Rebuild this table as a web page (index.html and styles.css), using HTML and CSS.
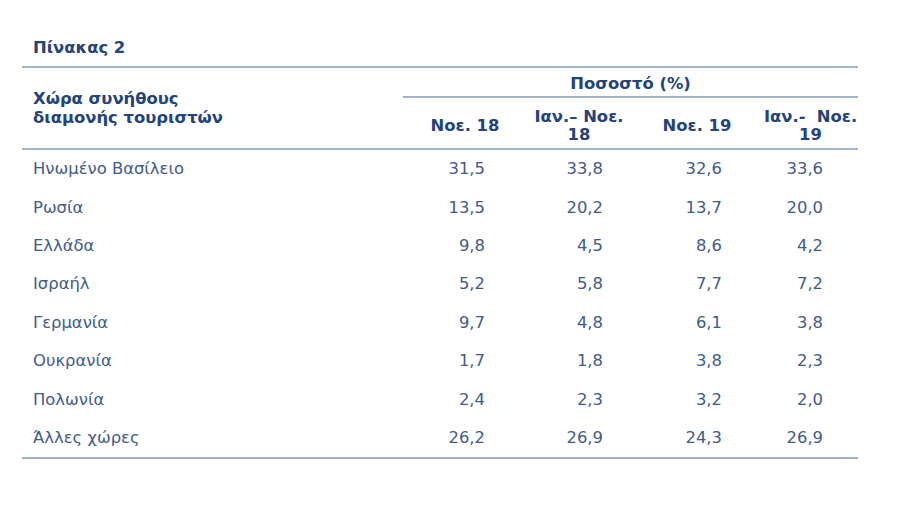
FILE: index.html
```html
<!DOCTYPE html>
<html lang="el">
<head>
<meta charset="utf-8">
<title>Πίνακας 2</title>
<link rel="stylesheet" href="styles.css">
</head>
<body>
<div class="wrap">
  <div class="title">Πίνακας 2</div>
  <table class="data">
    <colgroup>
      <col class="c0"><col class="c1"><col class="c2"><col class="c3"><col class="c4">
    </colgroup>
    <thead>
      <tr>
        <th rowspan="2" class="country-h">Χώρα συνήθους<br>διαμονής τουριστών</th>
        <th colspan="4" class="group">Ποσοστό (%)</th>
      </tr>
      <tr class="sub">
        <th>Νοε. 18</th>
        <th>Ιαν.– Νοε.<br>18</th>
        <th>Νοε. 19</th>
        <th>Ιαν.-&nbsp; Νοε.<br>19</th>
      </tr>
    </thead>
    <tbody>
      <tr><td>Ηνωμένο Βασίλειο</td><td>31,5</td><td>33,8</td><td>32,6</td><td>33,6</td></tr>
      <tr><td>Ρωσία</td><td>13,5</td><td>20,2</td><td>13,7</td><td>20,0</td></tr>
      <tr><td>Ελλάδα</td><td>9,8</td><td>4,5</td><td>8,6</td><td>4,2</td></tr>
      <tr><td>Ισραήλ</td><td>5,2</td><td>5,8</td><td>7,7</td><td>7,2</td></tr>
      <tr><td>Γερμανία</td><td>9,7</td><td>4,8</td><td>6,1</td><td>3,8</td></tr>
      <tr><td>Ουκρανία</td><td>1,7</td><td>1,8</td><td>3,8</td><td>2,3</td></tr>
      <tr><td>Πολωνία</td><td>2,4</td><td>2,3</td><td>3,2</td><td>2,0</td></tr>
      <tr><td>Άλλες χώρες</td><td>26,2</td><td>26,9</td><td>24,3</td><td>26,9</td></tr>
    </tbody>
  </table>
</div>
</body>
</html>
```
FILE: styles.css
```css
html, body {
  margin: 0;
  padding: 0;
  background: #ffffff;
}

body {
  font-family: "DejaVu Sans", Verdana, sans-serif;
  font-size: 16.4px;
  color: #3f5b8b;
}

.wrap {
  width: 836px;
  margin-left: 22px;
}

.title {
  font-weight: bold;
  color: #24437b;
  line-height: 20px;
  padding: 38px 0 8px 11px;
  border-bottom: 2px solid #a3b2ca;
}

.data {
  width: 836px;
  table-layout: fixed;
  border-collapse: separate;
  border-spacing: 0;
}

.c0 { width: 381px; }
.c1 { width: 124px; }
.c2 { width: 104px; }
.c3 { width: 132px; }
.c4 { width: 95px; }

.data th {
  font-weight: bold;
  color: #24437b;
  line-height: 18px;
  padding: 0;
  text-align: center;
  vertical-align: middle;
}

.data th.country-h {
  text-align: left;
  padding-left: 11px;
  line-height: 19px;
  border-bottom: 2px solid #a3b2ca;
}

.data th.group {
  height: 28px;
  box-sizing: border-box;
  padding: 7px 0 3px;
  border-bottom: 2px solid #a3b2ca;
}

.data tr.sub th {
  height: 52px;
  padding-top: 5px;
  box-sizing: border-box;
  border-bottom: 2px solid #a3b2ca;
}

.data td {
  height: 38.4px;
  padding: 0;
  line-height: 18px;
  text-align: right;
  vertical-align: middle;
}

.data td:first-child {
  text-align: left;
  padding-left: 11px;
}

.data td:nth-child(2) { padding-right: 42px; }
.data td:nth-child(3) { padding-right: 28px; }
.data td:nth-child(4) { padding-right: 41px; }
.data td:nth-child(5) { padding-right: 35px; }

.data tbody tr:last-child td {
  border-bottom: 2px solid #a3b2ca;
}
```
